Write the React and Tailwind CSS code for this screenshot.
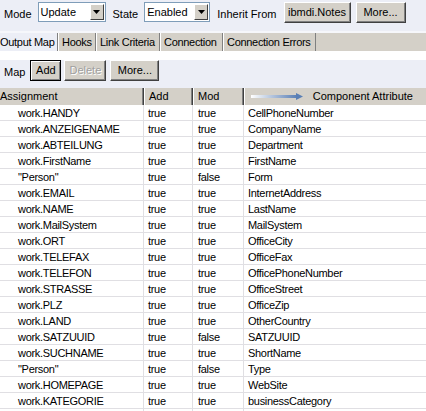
import React from "react";

const rows = [
  ["work.HANDY", "true", "true", "CellPhoneNumber"],
  ["work.ANZEIGENAME", "true", "true", "CompanyName"],
  ["work.ABTEILUNG", "true", "true", "Department"],
  ["work.FirstName", "true", "true", "FirstName"],
  ['"Person"', "true", "false", "Form"],
  ["work.EMAIL", "true", "true", "InternetAddress"],
  ["work.NAME", "true", "true", "LastName"],
  ["work.MailSystem", "true", "true", "MailSystem"],
  ["work.ORT", "true", "true", "OfficeCity"],
  ["work.TELEFAX", "true", "true", "OfficeFax"],
  ["work.TELEFON", "true", "true", "OfficePhoneNumber"],
  ["work.STRASSE", "true", "true", "OfficeStreet"],
  ["work.PLZ", "true", "true", "OfficeZip"],
  ["work.LAND", "true", "true", "OtherCountry"],
  ["work.SATZUUID", "true", "false", "SATZUUID"],
  ["work.SUCHNAME", "true", "true", "ShortName"],
  ['"Person"', "true", "false", "Type"],
  ["work.HOMEPAGE", "true", "true", "WebSite"],
  ["work.KATEGORIE", "true", "true", "businessCategory"],
  ["", "", "", ""],
];

function Combo({ value, width }) {
  return (
    <div
      className={`flex h-[20px] items-stretch border border-[#7f9db9] bg-white ${width}`}
    >
      <div className="flex flex-1 items-center pl-[2px] text-[11px] text-black">{value}</div>
      <div className="m-[1px] flex w-[14px] items-center justify-center border border-t-white border-l-white border-r-[#404040] border-b-[#404040] bg-[#d4d0c8]">
        <svg width="7" height="4" viewBox="0 0 7 4">
          <path d="M0 0h7L3.5 4z" fill="#000" />
        </svg>
      </div>
    </div>
  );
}

function Btn({ children, className = "", disabled, focused }) {
  return (
    <div
      className={`flex h-[21px] items-center justify-center whitespace-nowrap bg-[#d4d0c8] text-[11px] ${
        focused
          ? "border border-black shadow-[inset_1px_1px_0_#fff,inset_-1px_-1px_0_#808080]"
          : "border border-t-white border-l-white border-r-[#404040] border-b-[#404040] shadow-[inset_-1px_-1px_0_#808080]"
      } ${disabled ? "text-[#a0a0a0] [text-shadow:1px_1px_0_#fff]" : "text-black"} ${className}`}
    >
      {children}
    </div>
  );
}

function Tab({ children, active, w, pl }) {
  return (
    <div
      className={`flex h-full shrink-0 items-center whitespace-nowrap border-r border-r-[#808080] text-[11px] tracking-[-0.3px] text-black ${w} ${pl} ${
        active ? "bg-[#eceef6]" : "bg-[#d4d0c8] border-l border-l-white"
      }`}
    >
      {children}
    </div>
  );
}

export default function App() {
  return (
    <div
      className="h-[411px] w-[426px] overflow-hidden bg-[#eceef6] text-black"
      style={{ fontFamily: '"Liberation Sans", Arial, sans-serif' }}
    >
      {/* Top bar */}
      <div className="flex h-[31px] items-start pt-[2px] text-[11px]">
        <span className="ml-[4px] mt-[4px]">Mode</span>
        <div className="ml-[6px]">
          <Combo value="Update" width="w-[68px]" />
        </div>
        <span className="ml-[7px] mt-[4px]">State</span>
        <div className="ml-[6px]">
          <Combo value="Enabled" width="w-[66px]" />
        </div>
        <span className="ml-[7px] mt-[4px]">Inherit From</span>
        <Btn className="ml-[7px] w-[67px]">ibmdi.Notes</Btn>
        <Btn className="ml-[5px] w-[50px]">More...</Btn>
      </div>
      {/* Tabs */}
      <div className="flex h-[20px] overflow-hidden border-t-2 border-t-[#f6f7fb] bg-[#d4d0c8]">
        <Tab active w="w-[58px]" pl="pl-0">Output Map</Tab>
        <Tab w="w-[38px]" pl="pl-[3px]">Hooks</Tab>
        <Tab w="w-[64px]" pl="pl-[3px]">Link Criteria</Tab>
        <Tab w="w-[63px]" pl="pl-[3px]">Connection</Tab>
        <Tab w="w-[93px]" pl="pl-[3px]">Connection Errors</Tab>
      </div>
      <div className="h-[9px] bg-white" />
      {/* Map toolbar */}
      <div className="flex h-[28px] items-start text-[11px]">
        <span className="ml-[4px] mt-[4px]">Map</span>
        <Btn focused className="ml-[5px] h-[20px] w-[31px]">Add</Btn>
        <Btn disabled className="ml-[3px] h-[20px] w-[42px]">Delete</Btn>
        <Btn className="ml-[4px] h-[20px] w-[49px]">More...</Btn>
      </div>
      {/* Table */}
      <div className="bg-white">
        <div className="grid h-[17px] grid-cols-[144px_49px_51px_182px] bg-[#d4d0c8] text-[11px]">
          <div className="flex items-center border-r border-r-[#404040] shadow-[inset_-1px_0_0_#808080]">
            Assignment
          </div>
          <div className="flex items-center border-l border-r border-l-white border-r-[#404040] pl-[4px] shadow-[inset_-1px_0_0_#808080]">
            Add
          </div>
          <div className="flex items-center border-l border-r border-l-white border-r-[#404040] pl-[4px] shadow-[inset_-1px_0_0_#808080]">
            Mod
          </div>
          <div className="flex items-center border-l border-l-white pl-[6px]">
            <svg width="52" height="7" viewBox="0 0 52 7">
              <defs>
                <linearGradient id="g" x1="0" x2="1" y1="0" y2="0">
                  <stop offset="0" stopColor="#ffffff" />
                  <stop offset="1" stopColor="#5a7fb5" />
                </linearGradient>
              </defs>
              <rect x="0" y="2" width="46" height="3" fill="url(#g)" />
              <path d="M45 0L52 3.5L45 7z" fill="#5a7fb5" />
            </svg>
            <span className="ml-auto mr-[13px]">Component Attribute</span>
          </div>
        </div>
        {rows.map((r, i) => (
          <div
            key={i}
            className="grid h-[16px] grid-cols-[144px_49px_51px_182px] border-b border-b-[#e0dfe3] text-[11px] tracking-[-0.3px]"
          >
            <div className="flex items-center whitespace-nowrap border-r border-r-[#e0dfe3] pl-[18px]">{r[0]}</div>
            <div className="flex items-center border-r border-r-[#e0dfe3] pl-[4px]">{r[1]}</div>
            <div className="flex items-center border-r border-r-[#e0dfe3] pl-[5px]">{r[2]}</div>
            <div className="flex items-center whitespace-nowrap pl-[4px]">{r[3]}</div>
          </div>
        ))}
      </div>
    </div>
  );
}
